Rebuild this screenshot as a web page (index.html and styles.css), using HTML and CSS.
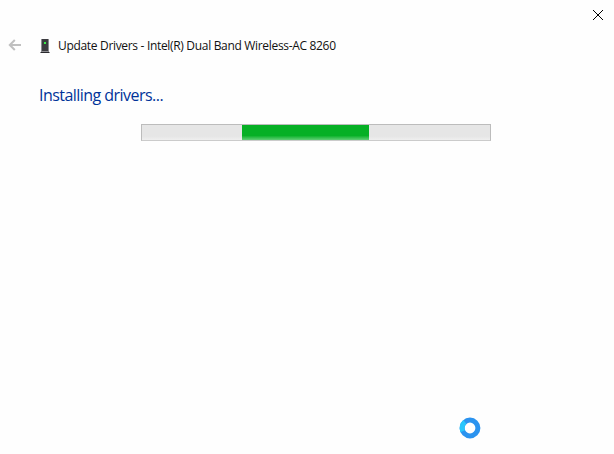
FILE: index.html
```html
<!DOCTYPE html>
<html lang="en">
<head>
<meta charset="utf-8">
<title>Update Drivers</title>
<link rel="stylesheet" href="styles.css">
</head>
<body>
<main class="window">
  <div class="titlebar">
    <svg class="close" viewBox="0 0 12 12"><path d="M1 1l10 10M11 1L1 11"/></svg>
  </div>
  <header class="header">
    <svg class="back" viewBox="0 0 14 12"><path d="M13 6H2M6.8 1L1.8 6l5 5"/></svg>
    <svg class="device" viewBox="0 0 10 16">
      <path fill="#8c8c90" d="M1 1h8v13h1v1H0v-1h1z"/>
      <path fill="#3c3c40" d="M2 1h6v12H2z"/>
      <path fill="#29292d" d="M1 14h8v1H1z"/>
      <path fill="#38ee48" d="M4 4h2v2H4z"/>
    </svg>
    <span class="title">Update Drivers - Intel(R) Dual Band Wireless-AC 8260</span>
  </header>
  <h1 class="heading">Installing drivers...</h1>
  <div class="progress"><div class="chunk"></div></div>
  <svg class="cursor" viewBox="0 0 22 22">
    <circle cx="11" cy="11" r="7.9" stroke="#2b93ef"/>
    <path d="M3.8 14.2A7.9 7.9 0 0 1 5.9 5" stroke="#27c6fc"/>
  </svg>
</main>
</body>
</html>
```
FILE: styles.css
```css
body {
  margin: 0;
  background: #fefefe;
  font-family: "Open Sans", "Noto Sans", sans-serif;
}
.window {
  position: relative;
  height: 454px;
  overflow: hidden;
}
.titlebar {
  display: flex;
  justify-content: flex-end;
  height: 27px;
  padding: 9px 10px 0 0;
  box-sizing: border-box;
}
.close {
  width: 12px;
  height: 12px;
  fill: none;
  stroke: #000;
  stroke-width: 1;
}
.header {
  display: flex;
  align-items: center;
  height: 38px;
  padding-left: 8px;
}
.back {
  width: 14px;
  height: 12px;
  margin-top: -2px;
  fill: none;
  stroke: #c0c0c0;
  stroke-width: 2;
}
.device {
  width: 10px;
  height: 16px;
  margin: 0 8px 0 18px;
}
.title {
  color: #111;
  font-size: 12px;
  line-height: 16px;
  letter-spacing: -0.32px;
  white-space: nowrap;
}
.heading {
  margin: 19px 0 0 39px;
  color: #003399;
  font-size: 16px;
  font-weight: 400;
  line-height: 22px;
  letter-spacing: -0.54px;
}
.progress {
  width: 348px;
  height: 15px;
  margin: 18px 0 0 141px;
  border: 1px solid #bcbcbc;
  border-bottom-color: #cbcbcb;
  background: linear-gradient(#e6e6e6 75%, #efefef);
}
.chunk {
  width: 127px;
  height: 15px;
  margin-left: 100px;
  background: linear-gradient(#06b025 70%, #62cf76);
}
.cursor {
  position: absolute;
  left: 459px;
  top: 417px;
  width: 22px;
  height: 22px;
  fill: none;
  stroke-width: 5;
}
```
